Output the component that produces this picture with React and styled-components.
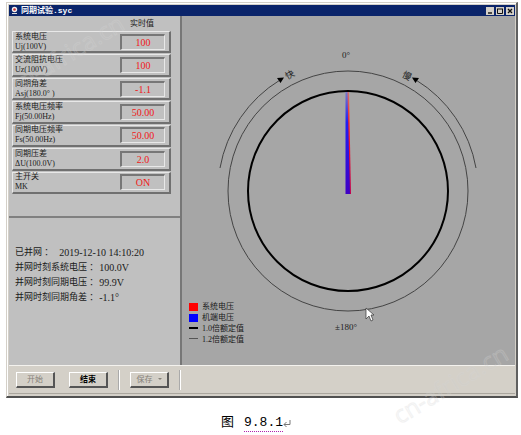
import React from "react";
import styled, { createGlobalStyle, css } from "styled-components";

const Global = createGlobalStyle`
  *, *::before, *::after { box-sizing: border-box; }
  body {
    margin: 0;
    background: #fff;
    color: #1a1a1a;
    font: 8px/10px "Liberation Serif", "Noto Sans CJK SC", serif;
  }
`;

const Page = styled.main`
  position: relative;
  min-height: 100vh;
  padding: 2px 3px 0 6px;
`;

const Window = styled.section`
  background: #d4d0c8;
  border: 1px solid #d4d0c8;
  border-right: 2px solid #606060;
  border-bottom: 2px solid #505050;
  box-shadow: inset 1px 1px 0 #fff;
  padding: 2px 1px 2px 2px;
`;

const TitleBar = styled.header`
  display: flex;
  align-items: center;
  gap: 3px;
  height: 11px;
  padding: 0 1px 0 2px;
  background: #0a246a;
  color: #fff;
`;

const Title = styled.h1`
  flex: 1;
  margin: 0;
  font: bold 8px/11px "Liberation Mono", "Noto Sans CJK SC", monospace;
`;

const WindowButtons = styled.div`
  display: flex;
  gap: 2px;
`;

const WindowButton = styled.button`
  display: flex;
  width: 8px;
  height: 8px;
  padding: 0;
  border: 0;
  background: #d4d0c8;
  color: #111;
`;

const Body = styled.div`
  display: grid;
  grid-template-columns: 173px 1fr;
`;

const Side = styled.div`
  display: flex;
  flex-direction: column;
  background: #c0c0c0;
  border-right: 2px solid #777;
`;

const Readings = styled.section`
  height: 202px;
  padding: 3px 9px 0 3px;
  border-bottom: 2px solid #808080;
`;

const ReadingsHead = styled.h2`
  margin: 0 6px 2px 0;
  padding-right: 11px;
  text-align: right;
  font-size: 8px;
  line-height: 10px;
  font-weight: 400;
`;

const ReadingList = styled.div`
  display: grid;
  grid-template-rows: repeat(7, minmax(0, 1fr));
  gap: 1px;
  height: 163px;
`;

const Reading = styled.div`
  display: flex;
  align-items: center;
  justify-content: space-between;
  padding: 0 4px 0 2px;
  border: 1px solid #e8e8e8;
  border-right: 2px solid #707070;
  border-bottom: 2px solid #707070;
`;

const ReadingLabel = styled.label`
  display: flex;
  flex-direction: column;
  white-space: nowrap;
  font-size: 8px;
  line-height: 10px;
`;

const ReadingValue = styled.output`
  width: 45px;
  height: 16px;
  border: 2px solid #777;
  border-right: 1px solid #e8e8e8;
  border-bottom: 1px solid #e8e8e8;
  color: #f01818;
  text-align: center;
  font-size: 10px;
  line-height: 13px;
`;

const Log = styled.section`
  padding: 27px 6px;
  font-size: 9px;
  line-height: 15px;
`;

const LogLine = styled.p`
  display: flex;
  align-items: center;
  gap: ${(p) => (p.$wide ? "6px" : "1px")};
  margin: 0;
  white-space: pre;
`;

const LogValue = styled.span`
  font-size: 10px;
`;

const Canvas = styled.section`
  display: grid;
  height: 349px;
  background: #a6a6a6;
`;

const Dial = styled.svg`
  grid-area: 1 / 1;
  justify-self: center;
  margin-top: 30px;
  text {
    font: 9px "Liberation Serif", "Noto Sans CJK SC", serif;
    text-anchor: middle;
    fill: #222;
  }
`;

const Legend = styled.ul`
  grid-area: 1 / 1;
  align-self: end;
  justify-self: start;
  margin: 0;
  padding: 0 0 20px 7px;
  list-style: none;
`;

const LegendItem = styled.li`
  display: flex;
  align-items: center;
  gap: 4px;
  height: 11px;
`;

const Swatch = styled.span`
  width: 9px;
  ${(p) =>
    p.$line
      ? css`
          height: ${p.$line};
          margin-bottom: 2px;
        `
      : css`
          height: 8px;
        `}
  background: ${(p) => p.$color};
`;

const Toolbar = styled.footer`
  display: flex;
  align-items: center;
  height: 29px;
  padding: 0 7px;
  border-top: 1px solid #f4f2ee;
  border-bottom: 1px solid #aaa69e;
`;

const ToolButton = styled.button`
  display: flex;
  align-items: center;
  justify-content: center;
  gap: 5px;
  width: 39px;
  height: 16px;
  padding: 0;
  border: 1px solid #fff;
  border-right: 2px solid #555;
  border-bottom: 2px solid #555;
  background: #d4d0c8;
  color: #000;
  font: bold 8px/10px "Noto Sans CJK SC", sans-serif;
  & + & { margin-left: 14px; }
  &:disabled {
    color: #858179;
    font-weight: 400;
  }
`;

const Divider = styled.span`
  width: 2px;
  height: 20px;
  margin: 0 10px;
  border-left: 1px solid #aaa;
  border-right: 1px solid #fff;
`;

const Caption = styled.p`
  display: flex;
  align-items: center;
  justify-content: center;
  margin: 16px 0 0;
  padding-right: 12px;
  color: #000;
  font: 13px/18px "Liberation Mono", "Noto Sans CJK SC", monospace;
`;

const Figure = styled.span`
  margin-left: 10px;
  line-height: 16px;
  border-bottom: 1px dotted #b020b0;
`;

const Watermark = styled.span`
  position: absolute;
  ${(p) => (p.$corner === "top" ? "left: 2px; top: 40px;" : "right: 6px; top: 370px;")}
  color: rgba(200, 200, 200, 0.1);
  -webkit-text-stroke: 1px rgba(215, 215, 215, 0.28);
  font: 24px/28px "Open Sans", sans-serif;
  white-space: nowrap;
  transform: rotate(-31deg);
  pointer-events: none;
`;

const readings = [
  ["系统电压", "Uj(100V)", "100"],
  ["交流阻抗电压", "Uz(100V)", "100"],
  ["同期角差", "Asj(180.0° )", "-1.1"],
  ["系统电压频率", "Fj(50.00Hz)", "50.00"],
  ["同期电压频率", "Fs(50.00Hz)", "50.00"],
  ["同期压差", "ΔU(100.0V)", "2.0"],
  ["主开关", "MK", "ON"],
];

const log = [
  ["已并网 ：", "2019-12-10 14:10:20"],
  ["并网时刻系统电压 ：", "100.0V"],
  ["并网时刻同期电压 ：", "99.9V"],
  ["并网时刻同期角差 ：", "-1.1°"],
];

const legend = [
  ["系统电压", "#f00"],
  ["机端电压", "#00f"],
  ["1.0倍额定值", "#000", "2px"],
  ["1.2倍额定值", "#555", "1px"],
];

function SyncDial() {
  return (
    <Dial width="302" height="290" viewBox="0 0 302 290" role="img" aria-label="同期表">
      <defs>
        <linearGradient id="red" x1="0" y1="0" x2="0" y2="1">
          <stop offset="0" stopColor="#d07070" />
          <stop offset="0.3" stopColor="#f22" />
          <stop offset="1" stopColor="#c00050" />
        </linearGradient>
        <linearGradient id="blue" x1="0" y1="0" x2="0" y2="1">
          <stop offset="0" stopColor="#7878c8" />
          <stop offset="0.3" stopColor="#2020f4" />
          <stop offset="1" stopColor="#4000c4" />
        </linearGradient>
      </defs>
      <g fill="none" stroke="#444">
        <circle cx="150" cy="145" r="120" />
        <circle cx="150" cy="145" r="100" stroke="#000" strokeWidth="2" />
        <path d="M22 122A130 130 0 0 1 82 34" />
        <path d="M278 122A130 130 0 0 0 218 34" />
      </g>
      <path d="M86 31.500L82.500 37L79 32Z M214 31.500L217.500 37L221 32Z" fill="#000" />
      <path d="M148 46H151L153 148H148Z" fill="url(#red)" />
      <path d="M147.500 46H149.500L152 148H147.500Z" fill="url(#blue)" />
      <text x="148" y="12">0°</text>
      <text x="148" y="284">±180°</text>
      <text transform="translate(92 29) rotate(-30)" y="3">快</text>
      <text transform="translate(209 30) rotate(28)" y="3">慢</text>
      <path
        d="M168 262V273L171 270L173 275L175 274L173 269H176Z"
        fill="#fff"
        stroke="#333"
        strokeWidth="0.7"
      />
    </Dial>
  );
}

export default function App() {
  return (
    <>
      <Global />
      <Page>
        <Window>
          <TitleBar>
            <svg width="7" height="9" viewBox="0 0 7 9" aria-hidden="true">
              <circle cx="3.5" cy="3.5" r="2.7" fill="#eee" />
              <circle cx="3.5" cy="3.5" r="1.3" fill="#c33" />
              <path d="M1 7.500h5" stroke="#ddd" strokeWidth="1" />
            </svg>
            <Title>同期试验.syc</Title>
            <WindowButtons>
              <WindowButton aria-label="最小化">
                <svg width="8" height="8"><path d="M2 6h4" stroke="currentColor" strokeWidth="1.4" /></svg>
              </WindowButton>
              <WindowButton aria-label="最大化">
                <svg width="8" height="8">
                  <path d="M1.500 2V6.500H6.500V2M1 2H7" fill="none" stroke="currentColor" />
                </svg>
              </WindowButton>
              <WindowButton aria-label="关闭">
                <svg width="8" height="8"><path d="M2 2l4 4M6 2L2 6" stroke="currentColor" strokeWidth="1.3" /></svg>
              </WindowButton>
            </WindowButtons>
          </TitleBar>
          <Body>
            <Side>
              <Readings>
                <ReadingsHead>实时值</ReadingsHead>
                <ReadingList>
                  {readings.map(([name, unit, value], i) => (
                    <Reading key={name}>
                      <ReadingLabel htmlFor={`reading-${i}`}>
                        <span>{name}</span>
                        <span>{unit}</span>
                      </ReadingLabel>
                      <ReadingValue id={`reading-${i}`}>{value}</ReadingValue>
                    </Reading>
                  ))}
                </ReadingList>
              </Readings>
              <Log>
                {log.map(([name, value], i) => (
                  <LogLine key={name} $wide={i === 0}>
                    <span>{name}</span>
                    <LogValue>{value}</LogValue>
                  </LogLine>
                ))}
              </Log>
            </Side>
            <Canvas>
              <SyncDial />
              <Legend>
                {legend.map(([name, color, line]) => (
                  <LegendItem key={name}>
                    <Swatch $color={color} $line={line} />
                    {name}
                  </LegendItem>
                ))}
              </Legend>
            </Canvas>
          </Body>
          <Toolbar>
            <ToolButton disabled>开始</ToolButton>
            <ToolButton>结束</ToolButton>
            <Divider />
            <ToolButton disabled>
              保存
              <svg width="4" height="3" aria-hidden="true"><path d="M0 0h4L2 2Z" fill="currentColor" /></svg>
            </ToolButton>
            <Divider />
          </Toolbar>
        </Window>
        <Caption>
          图<Figure>9.8.1</Figure>
          <svg width="8" height="9" viewBox="0 0 8 9" aria-hidden="true">
            <path d="M7 1V5.500H1M3.500 3L1 5.500L3.500 8" fill="none" stroke="#777" />
          </svg>
        </Caption>
        <Watermark $corner="top" aria-hidden="true">cn-africa.cn</Watermark>
        <Watermark $corner="bottom" aria-hidden="true">cn-africa.cn</Watermark>
      </Page>
    </>
  );
}
